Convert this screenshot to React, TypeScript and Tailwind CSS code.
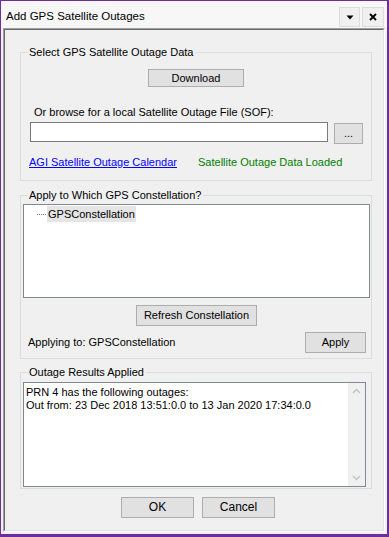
import React from "react";

function Btn({ className, children }: { className: string; children: React.ReactNode }) {
  return (
    <div
      className={
        "bg-[#e1e1e1] border border-[#adadad] flex items-center justify-center leading-[13px] shrink-0 " +
        className
      }
    >
      {children}
    </div>
  );
}

export default function App() {
  return (
    <div className="w-[389px] h-[537px] bg-[#f0f0f0] border-l border-t border-r-2 border-b-[3px] border-[#6b2f9b] flex flex-col font-['Liberation_Sans',Arial,sans-serif] text-[11px] text-black overflow-hidden">
      {/* title bar */}
      <div className="h-[27px] shrink-0 bg-[#f7f7f7] flex items-start pl-[5px] pr-[3px] gap-[2px]">
        <span className="flex-1 text-[11.5px] leading-[14px] mt-[8px]">Add GPS Satellite Outages</span>
        <div className="mt-[6px] w-[21px] h-[20px] border border-[#dcdcdc] bg-[#f0f0f0] flex items-center justify-center">
          <svg width="8" height="5" viewBox="0 0 8 5">
            <path d="M0.5 0.5 L7.5 0.5 L4 4.5 Z" fill="#000" />
          </svg>
        </div>
        <div className="mt-[6px] w-[22px] h-[20px] border border-[#dcdcdc] bg-[#f0f0f0] flex items-center justify-center">
          <svg width="8" height="8" viewBox="0 0 8 8">
            <path d="M1 1 L7 7 M7 1 L1 7" stroke="#000" strokeWidth="1.8" />
          </svg>
        </div>
      </div>

      {/* sunken frame */}
      <div className="flex-1 mx-[2px] mb-[2px] border border-t-[#a0a0a0] border-l-[#a0a0a0] border-r-white border-b-white flex flex-col">
        <div className="flex-1 border border-t-[#696969] border-l-[#696969] border-r-[#e3e3e3] border-b-[#e3e3e3] flex flex-col pl-[15px] pr-[11px] pt-[15px]">
          {/* Group 1 */}
          <fieldset className="border border-[#dcdcdc] flex flex-col pb-[11px]">
            <legend className="ml-[7px] pl-[1px] pr-[2px] leading-[15px]">Select GPS Satellite Outage Data</legend>
            <Btn className="mt-[9px] ml-[127px] w-[96px] h-[18px]">Download</Btn>
            <div className="mt-[19px] ml-[13px] h-[13px] leading-[13px]">
              Or browse for a local Satellite Outage File (SOF):
            </div>
            <div className="mt-[3px] flex items-start h-[22px]">
              <div className="ml-[9px] w-[298px] h-[20px] bg-white border border-[#7a7a7a]" />
              <Btn className="ml-[6px] mt-[1px] w-[29px] h-[21px]">...</Btn>
            </div>
            <div className="mt-[12px] h-[13px] flex items-center leading-[13px]">
              <span className="ml-[8px] w-[169px] shrink-0">
                <span className="text-[#0000ff] underline">AGI Satellite Outage Calendar</span>
              </span>
              <span className="text-[#008000]">Satellite Outage Data Loaded</span>
            </div>
          </fieldset>

          {/* Group 2 */}
          <fieldset className="mt-[7px] border border-[#dcdcdc] flex flex-col pb-[5px]">
            <legend className="ml-[7px] pl-[1px] pr-[2px] leading-[15px]">Apply to Which GPS Constellation?</legend>
            <div className="mt-[1px] ml-[2px] w-[347px] h-[94px] bg-white border border-[#828790] pt-[1px]">
              <div className="flex items-center h-[16px] ml-[13px]">
                <div className="w-[9px] border-t border-dotted border-[#808080] mt-[1px]" />
                <span className="ml-[1px] px-[1px] h-[16px] leading-[16px] bg-[#e5e5e5]">GPSConstellation</span>
              </div>
            </div>
            <Btn className="mt-[7px] ml-[115px] w-[121px] h-[21px]">Refresh Constellation</Btn>
            <div className="mt-[6px] h-[21px] flex items-center justify-between">
              <span className="ml-[7px] leading-[13px]">Applying to: GPSConstellation</span>
              <Btn className="mr-[5px] w-[61px] h-[21px]">Apply</Btn>
            </div>
          </fieldset>

          {/* Group 3 */}
          <fieldset className="mt-[6px] border border-[#dcdcdc] flex flex-col pb-[1px]">
            <legend className="ml-[7px] pl-[1px] pr-[2px] leading-[15px]">Outage Results Applied</legend>
            <div className="mt-[2px] ml-[2px] w-[343px] h-[105px] bg-white border border-[#828790] flex">
              <div className="flex-1 pl-[2px] pt-[3px] leading-[13px]">
                <div>PRN 4 has the following outages:</div>
                <div>Out from: 23 Dec 2018 13:51:0.0 to 13 Jan 2020 17:34:0.0</div>
              </div>
              <div className="w-[17px] bg-[#f0f0f0] flex flex-col justify-between items-center py-[5px]">
                <svg width="9" height="6" viewBox="0 0 9 6">
                  <path d="M1 5 L4.5 1.5 L8 5" stroke="#c0c0c0" strokeWidth="1.3" fill="none" />
                </svg>
                <svg width="9" height="6" viewBox="0 0 9 6">
                  <path d="M1 1 L4.5 4.5 L8 1" stroke="#c0c0c0" strokeWidth="1.3" fill="none" />
                </svg>
              </div>
            </div>
          </fieldset>

          <div className="mt-[8px] flex gap-[8px] ml-[101px]">
            <Btn className="w-[73px] h-[21px] text-[12px]">OK</Btn>
            <Btn className="w-[73px] h-[21px] text-[12px]">Cancel</Btn>
          </div>
        </div>
      </div>
    </div>
  );
}
